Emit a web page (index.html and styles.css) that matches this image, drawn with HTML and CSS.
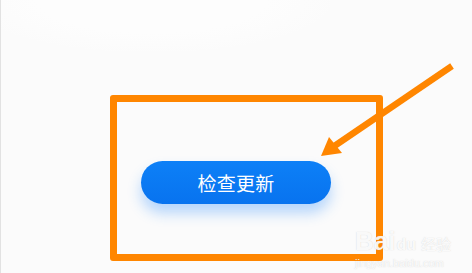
FILE: index.html
```html
<!DOCTYPE html>
<html lang="zh">
<head>
<meta charset="utf-8">
<link rel="stylesheet" href="styles.css">
</head>
<body>
<div class="page">
  <div class="content">
    <button class="update-btn">检查更新</button>
  </div>
  <div class="frame"></div>
  <svg class="arrow" width="472" height="273" viewBox="0 0 472 273">
    <line x1="452" y1="66" x2="330" y2="149" stroke="#ff8600" stroke-width="6.5" stroke-linecap="butt"/>
    <polygon points="321,156 329,137 342,153" fill="#ff8600"/>
  </svg>
  <div class="watermark">
    <div class="wm-top"><span class="wm-bai">Bai</span><span class="wm-du">du</span><span class="wm-jy">经验</span></div>
    <div class="wm-url">jingyan.baidu.com</div>
  </div>
</div>
</body>
</html>
```

FILE: styles.css
```css
html, body {
  margin: 0;
  padding: 0;
}
body {
  width: 472px;
  height: 273px;
  overflow: hidden;
  background: #fbfbfb;
  font-family: "Noto Sans CJK SC", "Noto Sans", sans-serif;
}
.page {
  position: relative;
  width: 472px;
  height: 273px;
  border-left: 1px solid #e2e2e2;
  box-sizing: border-box;
  background:
    radial-gradient(ellipse 190px 55px at 150px 0px, #fdfdfd 0%, #fdfdfd 60%, rgba(252,252,252,0) 100%),
    #fbfbfb;
}
.content {
  display: flex;
  justify-content: center;
  padding-top: 161px;
  padding-right: 1px;
}
.update-btn {
  width: 190px;
  height: 43px;
  border: none;
  border-radius: 22px;
  background: linear-gradient(180deg, #0d80f7 0%, #0873ef 100%);
  color: #ffffff;
  font-family: "Noto Sans CJK SC", sans-serif;
  font-size: 19px;
  font-weight: 400;
  letter-spacing: 0.3px;
  line-height: 43px;
  padding: 0;
  box-shadow: 0 9px 14px rgba(30, 135, 255, 0.32);
}
.frame {
  position: absolute;
  left: 109px;
  top: 95px;
  width: 273px;
  height: 166px;
  box-sizing: border-box;
  border: 7px solid #ff8600;
  border-radius: 3px;
}
.arrow {
  position: absolute;
  left: -1px;
  top: 0;
}
.watermark {
  position: absolute;
  left: 354px;
  top: 228px;
  color: rgba(255, 255, 255, 0.9);
  text-shadow: 0 0 1px rgba(170, 170, 170, 0.5);
}
.wm-top {
  display: flex;
  align-items: baseline;
  line-height: 26px;
}
.wm-bai {
  font-family: "Liberation Sans", sans-serif;
  font-weight: bold;
  font-size: 26px;
}
.wm-du {
  font-family: "Liberation Sans", sans-serif;
  font-weight: bold;
  font-size: 16px;
  margin-left: 1px;
}
.wm-jy {
  font-family: "Noto Sans CJK SC", sans-serif;
  font-size: 15px;
  margin-left: 5px;
}
.wm-url {
  font-family: "Liberation Sans", sans-serif;
  font-size: 11px;
  line-height: 12px;
  margin-top: -1px;
}
```
